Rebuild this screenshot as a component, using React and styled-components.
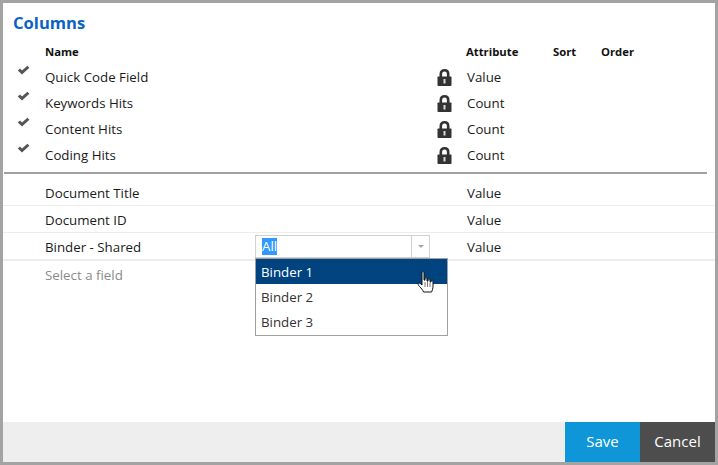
import styled, { createGlobalStyle } from 'styled-components'

const Global = createGlobalStyle`
  html, body { margin: 0; padding: 0; background: #fff; }
  body { font-family: "Open Sans", "Noto Sans", sans-serif; font-size: 13.3px; color: #1b1b1b; }
`

const Dialog = styled.div`
  box-sizing: border-box;
  width: 718px;
  height: 465px;
  border: 3px solid #a3a3a3;
  display: flex;
  flex-direction: column;
  background: #fff;
`
const Body = styled.div`
  flex: 1;
  min-height: 0;
`
const Title = styled.h1`
  box-sizing: border-box;
  margin: 0;
  padding: 10px 0 0 10px;
  height: 36px;
  font-size: 16.6px;
  line-height: 20px;
  font-weight: 700;
  color: #0b63c5;
`
const Row = styled.div`
  display: grid;
  grid-template-columns: 42px 392px 30px 86px 48px 1fr;
  align-items: center;
  height: ${p => p.$height || 26}px;
  box-sizing: border-box;
  padding-top: ${p => p.$drop || 0}px;
  border-bottom: ${p => p.$line ? `${p.$line}px solid #ececec` : 'none'};
`
const HeadCell = styled.div`
  font-size: 11.3px;
  font-weight: 700;
  color: #111;
  margin-left: ${p => p.$nudge || 0}px;
`
const Cell = styled.div`
  position: relative;
  white-space: nowrap;
  color: ${p => p.$muted ? '#8a8a8a' : '#1b1b1b'};
`
const NameCell = styled(Cell)`
  height: 100%;
  display: flex;
  align-items: center;
`
const CheckWrap = styled.div`
  padding-left: 14px;
  height: 100%;
  display: flex;
  align-items: flex-start;
  padding-top: 1px;
  box-sizing: border-box;
`
const LockWrap = styled.div`
  display: flex;
  align-items: center;
`
const Divider = styled.div`
  height: 2px;
  margin: 4px 8px 6px 1px;
  background: #a0a0a0;
`
const Combo = styled.div`
  position: absolute;
  left: 210px;
  top: 1px;
  width: 193px;
  z-index: 2;
`
const ComboInput = styled.div`
  box-sizing: border-box;
  width: 175px;
  height: 23px;
  border: 1px solid #d0d0d0;
  background: #fff;
  display: flex;
  align-items: center;
  padding-left: 6px;
`
const Selected = styled.span`
  background: #3399ff;
  color: #fff;
  line-height: 17px;
`
const Caret = styled.div`
  margin-left: auto;
  width: 17px;
  height: 100%;
  border-left: 1px solid #d0d0d0;
  display: flex;
  align-items: center;
  justify-content: center;
  &::after {
    content: "";
    border-left: 3px solid transparent;
    border-right: 3px solid transparent;
    border-top: 3px solid #a8a8a8;
  }
`
const List = styled.div`
  box-sizing: border-box;
  width: 193px;
  height: 78px;
  border: 1px solid #a0a0a0;
  background: #fff;
`
const Option = styled.div`
  position: relative;
  height: 25px;
  line-height: 26px;
  padding-left: 5px;
  background: ${p => p.$active ? '#00437f' : 'transparent'};
  color: ${p => p.$active ? '#fff' : '#333'};
`
const Pointer = styled.svg`
  position: absolute;
  left: 161px;
  top: 12px;
`
const Footer = styled.div`
  height: 40px;
  background: #eeeeee;
  display: flex;
  justify-content: flex-end;
`
const Button = styled.button`
  width: 75px;
  height: 40px;
  border: 0;
  padding: 0 0 2px;
  font: inherit;
  font-size: 15px;
  color: #fff;
  background: ${p => p.$primary ? '#0f96d8' : '#4d4d4d'};
`

const Check = () => (
  <svg width="13" height="11" viewBox="0 0 13 11">
    <path d="M.8 5.600 L3 3.600 L5 5.600 L10.400 .8 L12.400 2.800 L5 9.600 Z" fill="#555" />
  </svg>
)

const Lock = () => (
  <svg width="15" height="17" viewBox="0 0 15 17">
    <path d="M3.800 8V5C3.800 2.600 5.300 1.300 7.500 1.300S11.200 2.600 11.200 5V8" fill="none" stroke="#333" strokeWidth="2.600" />
    <rect x="0.500" y="7.500" width="14" height="9.500" rx="0.800" fill="#333" />
    <rect x="6.500" y="10" width="2" height="4.500" fill="#d8d8d8" />
  </svg>
)

const Hand = () => (
  <Pointer width="18" height="24" viewBox="0 0 18 24">
    <path
      d="M5 1.500c0-1 2-1 2 0V9l1 .2V7.600c0-1 2-1 2 0V10l1 .2V8.800c0-1 2-1 2 0v2l1 .2v-.6c0-1 2-.8 2 .2v5.600c0 2-1 3-1.400 4.800H6.500C5.800 19 4.400 17.500 2.500 15.500 1 14 .8 12.800 1.500 12.300c.8-.6 2 .2 3.500 1.700Z"
      fill="#fff"
      stroke="#111"
      strokeWidth="1"
    />
    <path d="M8 11v5M10.500 11v5M13 11.500V16" stroke="#555" strokeWidth=".8" />
  </Pointer>
)

const locked = [
  ['Quick Code Field', 'Value'],
  ['Keywords Hits', 'Count'],
  ['Content Hits', 'Count'],
  ['Coding Hits', 'Count'],
]

export default function App() {
  return (
    <Dialog>
      <Global />
      <Body>
        <Title>Columns</Title>
        <Row $height={25}>
          <span />
          <HeadCell>Name</HeadCell>
          <span />
          <HeadCell $nudge={-1}>Attribute</HeadCell>
          <HeadCell>Sort</HeadCell>
          <HeadCell>Order</HeadCell>
        </Row>
        {locked.map(([name, attr]) => (
          <Row key={name}>
            <CheckWrap><Check /></CheckWrap>
            <Cell>{name}</Cell>
            <LockWrap><Lock /></LockWrap>
            <Cell>{attr}</Cell>
          </Row>
        ))}
        <Divider />
        <Row $height={26} $line={1}>
          <span />
          <Cell>Document Title</Cell>
          <span />
          <Cell>Value</Cell>
        </Row>
        <Row $height={27} $line={1} $drop={1}>
          <span />
          <Cell>Document ID</Cell>
          <span />
          <Cell>Value</Cell>
        </Row>
        <Row $height={28} $line={2} $drop={1}>
          <span />
          <NameCell>
            Binder - Shared
            <Combo>
              <ComboInput>
                <Selected>All</Selected>
                <Caret />
              </ComboInput>
              <List>
                <Option $active>Binder 1<Hand /></Option>
                <Option>Binder 2</Option>
                <Option>Binder 3</Option>
              </List>
            </Combo>
          </NameCell>
          <span />
          <Cell>Value</Cell>
        </Row>
        <Row $height={28}>
          <span />
          <Cell $muted>Select a field</Cell>
        </Row>
      </Body>
      <Footer>
        <Button $primary>Save</Button>
        <Button>Cancel</Button>
      </Footer>
    </Dialog>
  )
}
